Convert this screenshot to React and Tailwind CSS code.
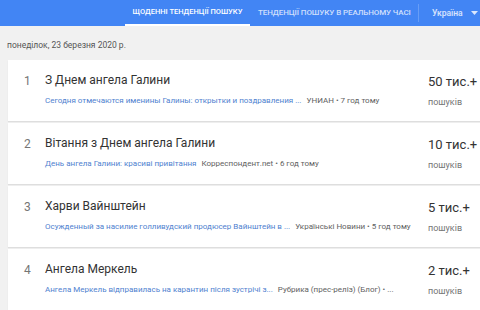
const items = [
  {
    n: 1,
    title: "З Днем ангела Галини",
    link: "Сегодня отмечаются именины Галины: открытки и поздравления ...",
    source: "УНИАН • 7 год тому",
    count: "50 тис.+",
  },
  {
    n: 2,
    title: "Вітання з Днем ангела Галини",
    link: "День ангела Галини: красиві привітання",
    source: "Корреспондент.net • 6 год тому",
    count: "10 тис.+",
  },
  {
    n: 3,
    title: "Харви Вайнштейн",
    link: "Осужденный за насилие голливудский продюсер Вайнштейн в ...",
    source: "Українські Новини • 5 год тому",
    count: "5 тис.+",
  },
  {
    n: 4,
    title: "Ангела Меркель",
    link: "Ангела Меркель відправилась на карантин після зустрічі з...",
    source: "Рубрика (прес-реліз) (Блог) • ...",
    count: "2 тис.+",
  },
];

function Row({ item }) {
  return (
    <div className="flex h-[61px] bg-white shadow-[0_1px_1px_rgba(0,0,0,0.08)]">
      <div className="w-[16px] shrink-0 pt-[13px] pl-[16px] box-content text-[12px] leading-[16px] text-[#757575]">
        {item.n}
      </div>
      <div className="flex-1 min-w-0 pt-[12px] pl-[5px] pr-[12px]">
        <div className="text-[12px] leading-[16px] text-[#333]">{item.title}</div>
        <div className="mt-[7px] flex items-center text-[8px] leading-[12px] whitespace-nowrap">
          <span className="text-[#4f7fcf]">{item.link}</span>
          <span className="ml-[5px] text-[#616161]">{item.source}</span>
        </div>
      </div>
      <div className="w-[52px] shrink-0 pt-[13px]">
        <div className="text-[13px] leading-[18px] text-[#333] whitespace-nowrap">{item.count}</div>
        <div className="mt-[5px] text-[9px] leading-[12px] text-[#757575]">пошуків</div>
      </div>
    </div>
  );
}

export default function App() {
  return (
    <div className="w-[480px] h-[310px] overflow-hidden bg-[#f1f1f1] font-['Roboto',sans-serif]">
      <div className="flex h-[26px] bg-[#4285f4] uppercase whitespace-nowrap">
        <div className="w-[125px] shrink-0" />
        <div className="w-[125px] shrink-0 flex items-center justify-center text-[7.5px] font-medium text-white border-b-2 border-white">
          Щоденні тенденції пошуку
        </div>
        <div className="w-[168px] shrink-0 flex items-center pl-[8px] text-[8px] tracking-[-0.1px] font-medium text-white/75">
          Тенденції пошуку в реальному часі
        </div>
        <div className="w-px shrink-0 my-[4px] bg-white/20" />
        <div className="flex-1 flex items-center pl-[13px] text-white/80 normal-case text-[8.5px] font-medium">
          Україна
          <svg className="ml-[8px]" width="7" height="4" viewBox="0 0 7 4">
            <path d="M0 0h7L3.5 4z" fill="rgba(255,255,255,0.8)" />
          </svg>
        </div>
      </div>
      <div className="pl-[7px] pt-[13px] h-[34px] text-[8.5px] text-[#555]">
        понеділок, 23 березня 2020 р.
      </div>
      <div className="ml-[8px] flex flex-col gap-[2px]">
        {items.map((it) => (
          <Row key={it.n} item={it} />
        ))}
      </div>
    </div>
  );
}
